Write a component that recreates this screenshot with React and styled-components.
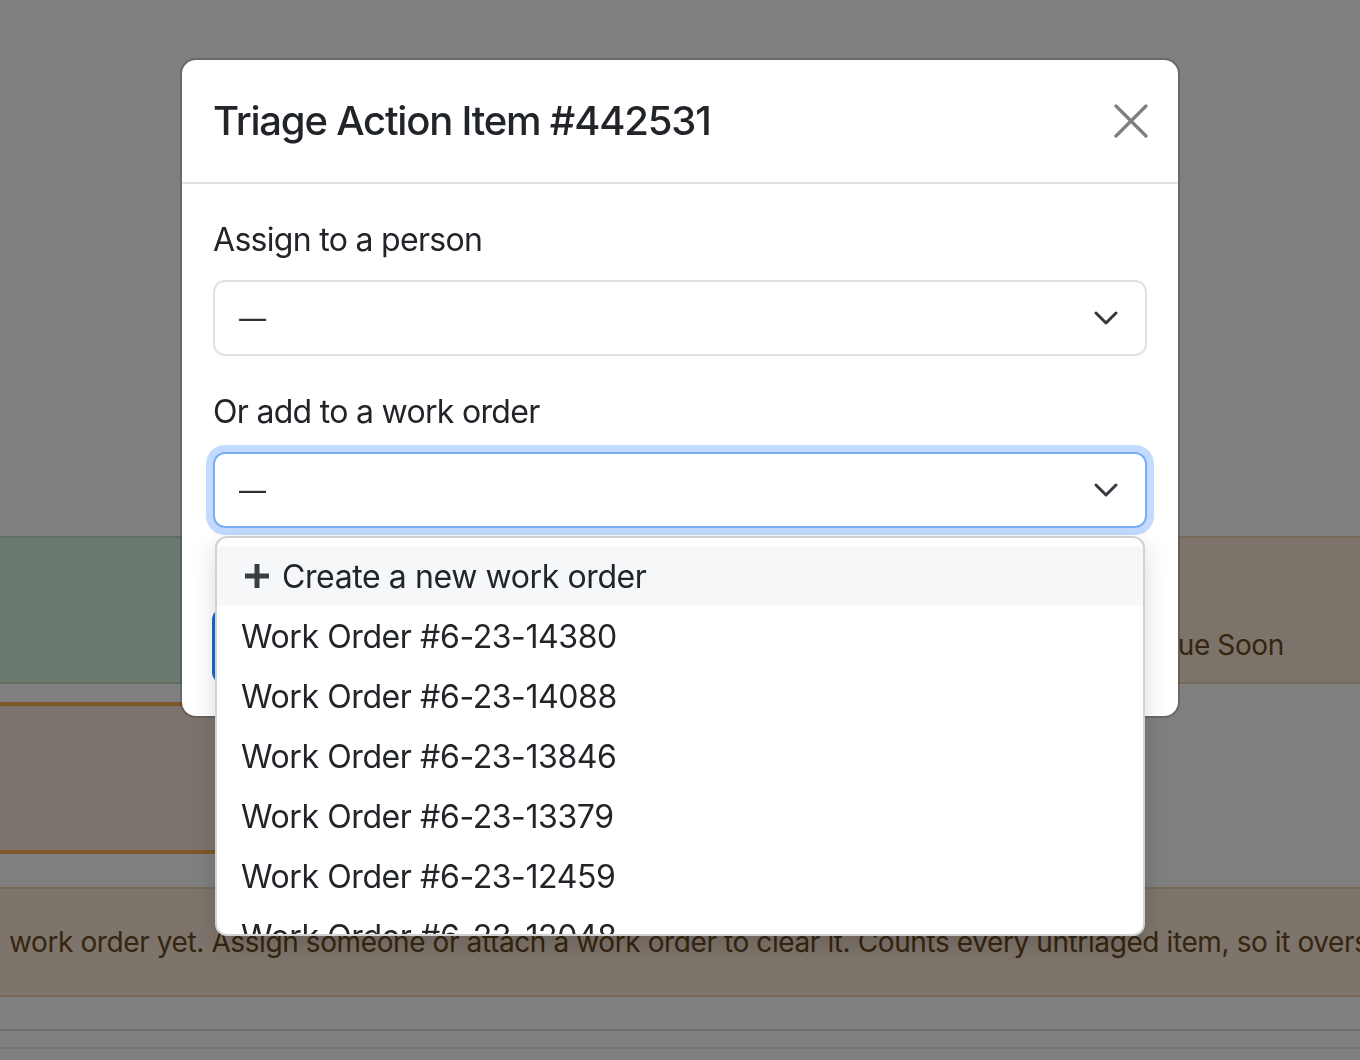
import React from 'react';
import styled, { createGlobalStyle } from 'styled-components';

const GlobalStyle = createGlobalStyle`
  html, body {
    margin: 0;
    padding: 0;
    background: #fff;
  }
  body {
    font-family: Inter, "Noto Sans", "Liberation Sans", sans-serif;
    color: #212529;
  }
  * {
    box-sizing: border-box;
  }
`;

/* ---------- page underneath the modal ---------- */

const Page = styled.div`
  height: 1060px;
  overflow: hidden;
  padding-top: 536px;
  display: flex;
  flex-direction: column;
`;

const StatsRow = styled.div`
  display: grid;
  grid-template-columns: 1100px 1fr;
  gap: 20px;
  height: 148px;
`;

const StatCard = styled.div`
  background: ${p => p.$bg};
  border-top: 2px solid ${p => p.$border};
  border-bottom: 2px solid ${p => p.$border};
  display: flex;
  align-items: flex-end;
  padding: 0 36px 20px 38px;
  font-size: 28px;
  line-height: 34px;
  letter-spacing: -0.4px;
  color: #6a4a22;
`;

const WarningBlock = styled.div`
  margin-top: 18px;
  width: 980px;
  height: 152px;
  background: #f8e8d8;
  border-top: 4px solid #ffb04e;
  border-bottom: 4px solid #ffb04e;
`;

const Alert = styled.div`
  margin-top: 33px;
  height: 110px;
  background: #fae9d6;
  border-top: 2px solid #f0d4ae;
  border-bottom: 2px solid #f0d4ae;
  display: flex;
  align-items: center;
  padding-left: 9px;
  font-size: 28px;
  letter-spacing: -0.4px;
  color: #6a4a22;
  white-space: nowrap;
  overflow: hidden;
`;

const TableRule = styled.div`
  margin-top: ${p => p.$gap}px;
  height: 2px;
  background: ${p => p.$color};
`;

/* ---------- modal ---------- */

const Backdrop = styled.div`
  position: fixed;
  inset: 0;
  background: rgba(0, 0, 0, 0.5);
`;

const ModalWrap = styled.div`
  position: fixed;
  inset: 0;
  display: flex;
  justify-content: center;
  align-items: flex-start;
  padding-top: 58px;
`;

const ModalContent = styled.div`
  width: 1000px;
  background: #fff;
  border: 2px solid rgba(0, 0, 0, 0.175);
  border-radius: 16px;
  background-clip: padding-box;
`;

const ModalHeader = styled.div`
  display: flex;
  align-items: center;
  justify-content: space-between;
  padding: 31px 30px 31px 31px;
  border-bottom: 2px solid #dee2e6;
`;

const ModalTitle = styled.h5`
  margin: 0;
  font-size: 40px;
  font-weight: 500;
  line-height: 60px;
  color: #212529;
  letter-spacing: -1.2px;
`;

const CloseButton = styled.button`
  width: 34px;
  height: 34px;
  padding: 0;
  border: 0;
  background: transparent;
  display: flex;
  align-items: center;
  justify-content: center;
  cursor: pointer;
`;

const ModalBody = styled.div`
  padding: 32px 31px 32px 31px;
`;

const Field = styled.div`
  margin-bottom: 32px;
  position: relative;
`;

const Label = styled.label`
  display: block;
  margin-bottom: 16px;
  font-size: 32px;
  line-height: 48px;
  letter-spacing: -0.7px;
  color: #212529;
`;

const SelectBox = styled.div`
  position: relative;
  height: 76px;
  display: flex;
  align-items: center;
  justify-content: space-between;
  padding: 0 27px 0 24px;
  border: 2px solid ${p => (p.$focused ? '#78aef8' : '#dee2e6')};
  border-radius: 12px;
  background: #fff;
  color: #212529;
  box-shadow: ${p => (p.$focused ? '0 0 0 7px rgba(13, 110, 253, 0.25)' : 'none')};
`;

const Placeholder = styled.span`
  font-size: 27px;
  line-height: 1;
  color: #2b3035;
`;

const Menu = styled.div`
  position: absolute;
  top: calc(100% + 10px);
  left: 0;
  right: 0;
  height: 400px;
  padding: 8px 0;
  background: #fff;
  border: 2px solid #d2d2d2;
  border-radius: 12px;
  box-shadow: 0 8px 24px rgba(0, 0, 0, 0.15);
  overflow: hidden;
  z-index: 10;
`;

const MenuItem = styled.div`
  height: 60px;
  display: flex;
  align-items: center;
  padding: 0 24px;
  font-size: 32px;
  letter-spacing: -0.4px;
  color: #212529;
  background: ${p => (p.$active ? '#f6f7f9' : 'transparent')};
  white-space: nowrap;
`;

const PlusIcon = styled.svg`
  width: 32px;
  height: 32px;
  margin-right: 9px;
  flex: none;
`;

const SaveButton = styled.button`
  margin-top: 48px;
  height: 76px;
  padding: 0 40px;
  margin-left: -1px;
  border: 0;
  border-radius: 12px;
  background: #1766d6;
  color: #fff;
  font-family: inherit;
  font-size: 32px;
`;

function Chevron() {
  return (
    <svg width="24" height="14" viewBox="0 0 24 14" fill="none">
      <path d="M2 2 L12 12 L22 2" stroke="#343a40" strokeWidth="3" strokeLinecap="round" strokeLinejoin="round" />
    </svg>
  );
}

function Select({ focused, children }) {
  return (
    <SelectBox $focused={focused}>
      <Placeholder>—</Placeholder>
      <Chevron />
      {children}
    </SelectBox>
  );
}

const workOrders = [
  '6-23-14380',
  '6-23-14088',
  '6-23-13846',
  '6-23-13379',
  '6-23-12459',
  '6-23-12048',
  '6-23-11712',
];

export default function App() {
  return (
    <>
      <GlobalStyle />
      <Page>
        <StatsRow>
          <StatCard $bg="#d6f2dc" $border="#bcdcc4" />
          <StatCard $bg="#f9e9d7" $border="#efd4b0">Due Soon</StatCard>
        </StatsRow>
        <WarningBlock />
        <Alert>
          work order yet. Assign someone or attach a work order to clear it. Counts every untriaged item, so it overstates the backlog slightly.
        </Alert>
        <TableRule $gap={32} $color="#dcdcdc" />
        <TableRule $gap={16} $color="#e8e8e8" />
      </Page>

      <Backdrop />
      <ModalWrap>
        <ModalContent>
          <ModalHeader>
            <ModalTitle>Triage Action Item #442531</ModalTitle>
            <CloseButton aria-label="Close">
              <svg width="34" height="34" viewBox="0 0 34 34" fill="none">
                <path d="M2 2 L32 32 M32 2 L2 32" stroke="#7f7f7f" strokeWidth="3.2" strokeLinecap="round" />
              </svg>
            </CloseButton>
          </ModalHeader>
          <ModalBody>
            <Field>
              <Label>Assign to a person</Label>
              <Select />
            </Field>
            <Field>
              <Label>Or add to a work order</Label>
              <Select focused>
                <Menu>
                  <MenuItem $active>
                    <PlusIcon viewBox="0 0 32 32" fill="none">
                      <path d="M16 4 V28 M4 16 H28" stroke="#3a3e43" strokeWidth="5" />
                    </PlusIcon>
                    Create a new work order
                  </MenuItem>
                  {workOrders.map(n => (
                    <MenuItem key={n}>Work Order #{n}</MenuItem>
                  ))}
                </Menu>
              </Select>
            </Field>
            <SaveButton>Save</SaveButton>
          </ModalBody>
        </ModalContent>
      </ModalWrap>
    </>
  );
}
